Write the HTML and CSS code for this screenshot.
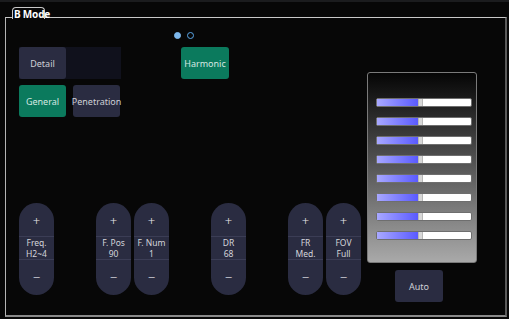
FILE: index.html
```html
<!DOCTYPE html>
<html>
<head>
<meta charset="utf-8">
<link rel="stylesheet" href="styles.css">
</head>
<body>
<div class="screen">
  <div class="tab">B Mode</div>
  <div class="frame">
    <div class="main">
      <div class="dots"><span class="dot on"></span><span class="dot"></span></div>
      <div class="top-row">
        <div class="left-group">
          <div class="tabbar"><div class="btn">Detail</div></div>
          <div class="btn-row">
            <div class="btn green">General</div>
            <div class="btn">Penetration</div>
          </div>
        </div>
        <div class="btn green harmonic">Harmonic</div>
      </div>
      <div class="pills">
        <div class="pill-group">
          <div class="pill"><div class="plus">+</div><div class="mid"><span>Freq.</span><span>H2~4</span></div><div class="minus">−</div></div>
        </div>
        <div class="pill-group">
          <div class="pill"><div class="plus">+</div><div class="mid"><span>F. Pos</span><span>90</span></div><div class="minus">−</div></div>
          <div class="pill"><div class="plus">+</div><div class="mid"><span>F. Num</span><span>1</span></div><div class="minus">−</div></div>
        </div>
        <div class="pill-group">
          <div class="pill"><div class="plus">+</div><div class="mid"><span>DR</span><span>68</span></div><div class="minus">−</div></div>
        </div>
        <div class="pill-group">
          <div class="pill"><div class="plus">+</div><div class="mid"><span>FR</span><span>Med.</span></div><div class="minus">−</div></div>
          <div class="pill"><div class="plus">+</div><div class="mid"><span>FOV</span><span>Full</span></div><div class="minus">−</div></div>
        </div>
      </div>
    </div>
    <div class="side">
      <div class="panel">
        <div class="slider"><div class="fill"></div><div class="knob"></div></div>
        <div class="slider"><div class="fill"></div><div class="knob"></div></div>
        <div class="slider"><div class="fill"></div><div class="knob"></div></div>
        <div class="slider"><div class="fill"></div><div class="knob"></div></div>
        <div class="slider"><div class="fill"></div><div class="knob"></div></div>
        <div class="slider"><div class="fill"></div><div class="knob"></div></div>
        <div class="slider"><div class="fill"></div><div class="knob"></div></div>
        <div class="slider"><div class="fill"></div><div class="knob"></div></div>
      </div>
      <div class="btn auto">Auto</div>
    </div>
  </div>
</div>
</body>
</html>
```
FILE: styles.css
```css
* { box-sizing: border-box; }
html, body { margin: 0; padding: 0; background: #ffffff; }
body { font-family: "Noto Sans", "DejaVu Sans", sans-serif; }

.screen {
  width: 509px;
  height: 319px;
  background: #070707;
  border-top: 2px solid #1b1c1e;
  padding-top: 5px;
  overflow: hidden;
}

.tab {
  position: relative;
  z-index: 1;
  margin-left: 12px;
  width: 33px;
  height: 12px;
  margin-bottom: -2px;
  border: 1px solid #c8c8c8;
  border-bottom: none;
  border-radius: 4px 4px 0 0;
  background: #070707;
  color: #ffffff;
  font-weight: bold;
  font-size: 10px;
  line-height: 13px;
  padding-left: 1px;
  white-space: nowrap;
  letter-spacing: -0.2px;
}

.frame {
  margin-left: 5px;
  width: 502px;
  height: 300px;
  border-left: 1px solid #b4b4b4;
  border-top: 1px solid #c8c8c8;
  border-right: 2px solid #5a5a5a;
  border-bottom: 2px solid #8a8a8a;
  display: flex;
}

.main {
  width: 361px;
  padding-left: 13px;
  display: flex;
  flex-direction: column;
}

.dots {
  display: flex;
  gap: 6px;
  padding-left: 155px;
  margin-top: 14px;
  height: 7px;
}
.dot {
  width: 7px;
  height: 7px;
  border-radius: 50%;
  border: 1.5px solid #5aa6e8;
}
.dot.on { background: #7db8ec; border-color: #7db8ec; }

.top-row {
  display: flex;
  margin-top: 8px;
  gap: 60px;
}
.left-group { display: flex; flex-direction: column; gap: 6px; }
.tabbar {
  width: 102px;
  height: 32px;
  background: #10111c;
  display: flex;
}
.btn-row { display: flex; gap: 7px; }

.btn {
  width: 47px;
  height: 32px;
  border-radius: 3px;
  background: #2a2c41;
  color: #cfd0d6;
  font-size: 9px;
  display: flex;
  align-items: center;
  justify-content: center;
  white-space: nowrap;
}
.btn.green { background: #0b7a5d; color: #d6e8e2; }
.harmonic { width: 48px; }

.pills {
  margin-top: 86px;
  display: flex;
  gap: 41px;
}
.pill-group { display: flex; gap: 3px; }
.pill-group + .pill-group { margin-left: 1px; }
.pill {
  width: 35px;
  height: 92px;
  border-radius: 17.5px;
  background: #2a2c41;
  color: #d4d5db;
  display: flex;
  flex-direction: column;
  font-size: 9px;
}
.plus, .minus {
  height: 33px;
  display: flex;
  align-items: center;
  justify-content: center;
  font-size: 13px;
  font-weight: 300;
  color: #e8e8ee;
}
.plus { padding-top: 3px; }
.minus { height: 35px; padding-bottom: 2px; }
.mid {
  height: 24px;
  border-top: 1px solid #3b3d55;
  border-bottom: 1px solid #3b3d55;
  display: flex;
  flex-direction: column;
  align-items: center;
  justify-content: center;
  line-height: 11px;
  font-size: 8.5px;
}

.side {
  display: flex;
  flex-direction: column;
  margin-top: 54px;
}
.panel {
  width: 110px;
  height: 191px;
  border: 1px solid #7a7a7a;
  border-radius: 3px;
  background: linear-gradient(to bottom, #050505 0%, #a9a9a9 100%);
  padding: 25px 0 0 8px;
  display: flex;
  flex-direction: column;
  gap: 10px;
}
.slider {
  width: 96px;
  height: 9px;
  border: 1px solid #6e6e6e;
  border-radius: 2px;
  background: #ffffff;
  display: flex;
}
.fill {
  width: 41px;
  height: 100%;
  background: linear-gradient(to right, #a8a8ff, #5a5aff);
}
.knob {
  width: 5px;
  height: 100%;
  background: #d8d8d8;
  border-left: 1px solid #b8b8b8;
  border-right: 1px solid #b8b8b8;
}
.auto {
  margin-top: 7px;
  margin-left: 28px;
  width: 48px;
}
```
